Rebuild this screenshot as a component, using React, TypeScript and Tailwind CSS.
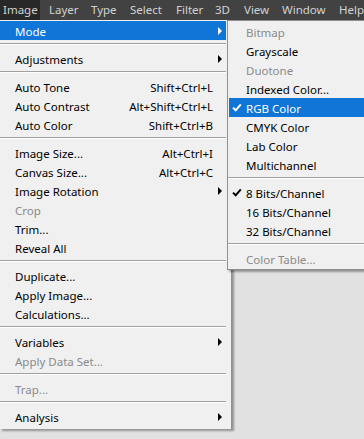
import React from 'react';

type Item =
  | { sep: true }
  | { sep?: false; label: string; shortcut?: string; arrow?: boolean; disabled?: boolean; active?: boolean; checked?: boolean };

const barItems = [
  { label: 'Image', w: 'w-[46px]', active: true },
  { label: 'Layer', w: 'w-[42px]' },
  { label: 'Type', w: 'w-[39px]' },
  { label: 'Select', w: 'w-[46px]' },
  { label: 'Filter', w: 'w-[39px]' },
  { label: '3D', w: 'w-[29px]' },
  { label: 'View', w: 'w-[38px]' },
  { label: 'Window', w: 'w-[57px]' },
  { label: 'Help', w: 'w-[40px]' },
];

const mainMenu: Item[] = [
  { label: 'Mode', arrow: true, active: true },
  { sep: true },
  { label: 'Adjustments', arrow: true },
  { sep: true },
  { label: 'Auto Tone', shortcut: 'Shift+Ctrl+L' },
  { label: 'Auto Contrast', shortcut: 'Alt+Shift+Ctrl+L' },
  { label: 'Auto Color', shortcut: 'Shift+Ctrl+B' },
  { sep: true },
  { label: 'Image Size...', shortcut: 'Alt+Ctrl+I' },
  { label: 'Canvas Size...', shortcut: 'Alt+Ctrl+C' },
  { label: 'Image Rotation', arrow: true },
  { label: 'Crop', disabled: true },
  { label: 'Trim...' },
  { label: 'Reveal All' },
  { sep: true },
  { label: 'Duplicate...' },
  { label: 'Apply Image...' },
  { label: 'Calculations...' },
  { sep: true },
  { label: 'Variables', arrow: true },
  { label: 'Apply Data Set...', disabled: true },
  { sep: true },
  { label: 'Trap...', disabled: true },
  { sep: true },
  { label: 'Analysis', arrow: true },
];

const modeMenu: Item[] = [
  { label: 'Bitmap', disabled: true },
  { label: 'Grayscale' },
  { label: 'Duotone', disabled: true },
  { label: 'Indexed Color...' },
  { label: 'RGB Color', checked: true, active: true },
  { label: 'CMYK Color' },
  { label: 'Lab Color' },
  { label: 'Multichannel' },
  { sep: true },
  { label: '8 Bits/Channel', checked: true },
  { label: '16 Bits/Channel' },
  { label: '32 Bits/Channel' },
  { sep: true },
  { label: 'Color Table...', disabled: true },
];

const Separator = () => (
  <div className="h-[9px] pt-[3px]">
    <div className="h-px bg-[#a0a0a0]" />
    <div className="h-px bg-white" />
  </div>
);

const Arrow = ({ white }: { white?: boolean }) => (
  <div
    className={`w-0 h-0 border-y-[4px] border-y-transparent border-l-[4px] ${white ? 'border-l-white' : 'border-l-black'}`}
  />
);

const Check = ({ white }: { white?: boolean }) => (
  <svg width="10" height="9" viewBox="0 0 10 9">
    <path d="M1 4.6 L3.7 7.3 L8.8 1.4" fill="none" stroke={white ? '#fff' : '#000'} strokeWidth="2" />
  </svg>
);

const textColor = (it: { disabled?: boolean; active?: boolean }) =>
  it.active ? 'text-white' : it.disabled ? 'text-[#8a8a8a]' : 'text-black';

const App = () => {
  return (
    <div
      className="relative w-[364px] h-[439px] overflow-hidden bg-[#e1e1e1] text-[11.5px]"
      style={{ fontFamily: '"Noto Sans", "DejaVu Sans", sans-serif' }}
    >
      {/* Menu bar */}
      <div className="flex h-[20px] bg-[#424242] text-[#d2d2d2] text-[11.5px] leading-[19px]">
        {barItems.map((b) => (
          <div key={b.label} className={`${b.w} shrink-0`}>
            <span className={`block h-[20px] pl-[3px] ${b.active ? 'w-[40px] bg-[#282828]' : ''}`}>{b.label}</span>
          </div>
        ))}
      </div>

      {/* Image menu */}
      <div className="w-[232px] h-[409px] bg-[#f0f0f0] border-r border-[#8f8f8f] pt-px pb-[3px] shadow-[2px_2px_2px_rgba(0,0,0,0.35)]">
        <div className="w-[226px]">
          {mainMenu.map((it, i) =>
            it.sep ? (
              <Separator key={i} />
            ) : (
              <div
                key={i}
                className={`flex items-center h-[19px] pl-[15px] ${it.active ? 'bg-[#0f75d6]' : ''} ${textColor(it)}`}
              >
                <span className="flex-1 pt-[2px] leading-[17px] whitespace-nowrap">{it.label}</span>
                {it.shortcut && <span className="pt-[2px] leading-[17px] whitespace-nowrap">{it.shortcut}</span>}
                <div className="w-[13px] pl-[5px] shrink-0">{it.arrow && <Arrow white={it.active} />}</div>
              </div>
            )
          )}
        </div>
      </div>

      {/* Mode submenu */}
      <div className="absolute left-[227px] top-[20px] w-[160px] h-[250px] bg-[#f0f0f0] border border-[#8f8f8f] pt-px shadow-[2px_2px_2px_rgba(0,0,0,0.35)]">
        {modeMenu.map((it, i) =>
          it.sep ? (
            <Separator key={i} />
          ) : (
            <div
              key={i}
              className={`flex items-center h-[19px] ml-px ${it.active ? 'bg-[#0f75d6]' : ''} ${textColor(it)}`}
            >
              <div className="w-[17px] pl-[3px] shrink-0 flex items-center">
                {it.checked && <Check white={it.active} />}
              </div>
              <span className="pt-[2px] leading-[17px] whitespace-nowrap">{it.label}</span>
            </div>
          )
        )}
      </div>
    </div>
  );
};

export default App;
